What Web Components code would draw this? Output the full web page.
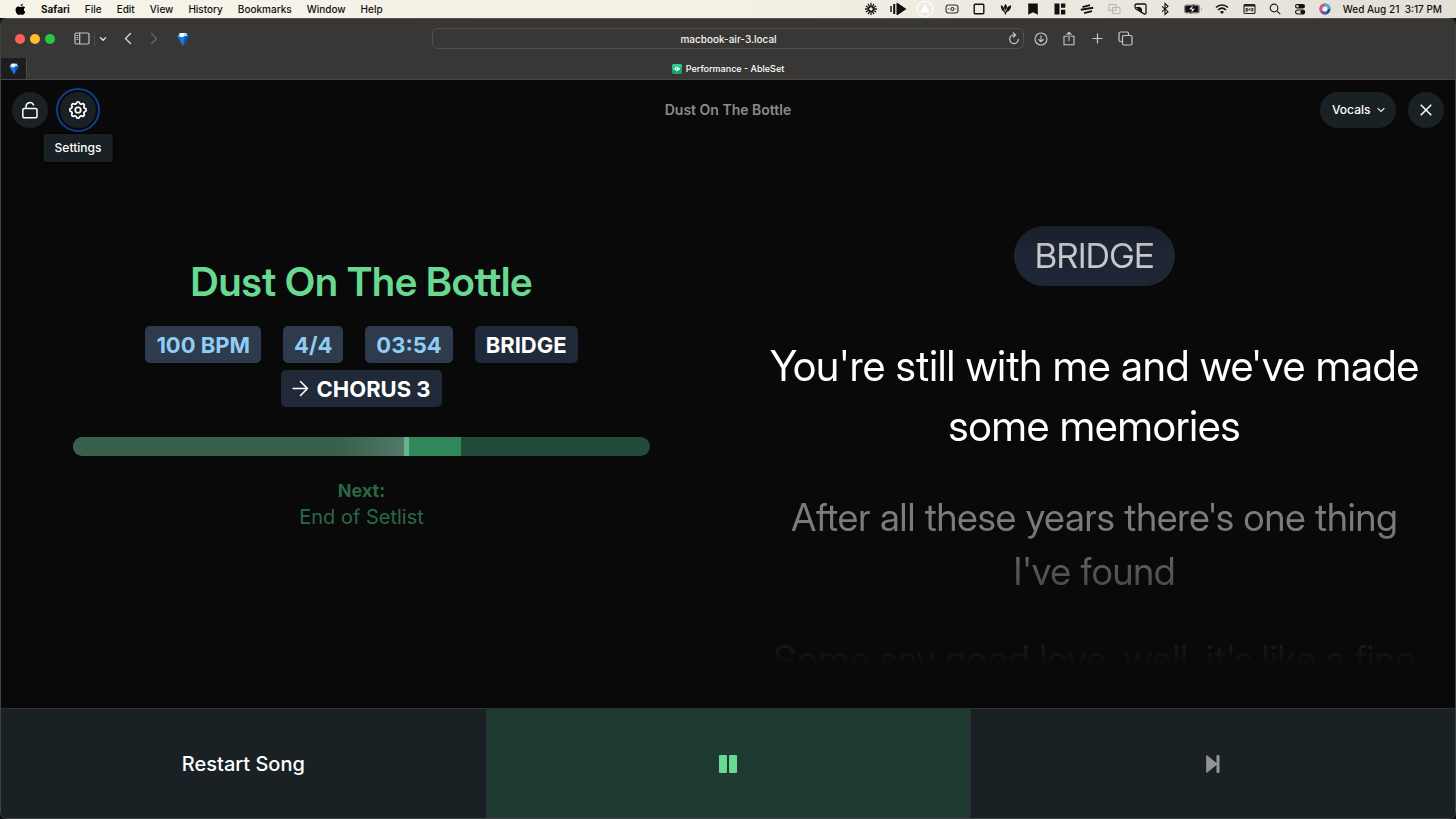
<!DOCTYPE html>
<html lang="en">
<head>
<meta charset="utf-8">
<title>Performance - AbleSet</title>
<style>
  html, body { margin: 0; height: 100%; }
  body { background: #101214; font-family: Inter, "Liberation Sans", sans-serif; color: #fff; }
</style>
</head>
<body>
<desktop-screen></desktop-screen>
<script>
const ICONS = {
  apple: [12, 14, '<path fill="#000" d="M8.500.8c.1 1.300-1 2.600-2.300 2.600C6.100 2.200 7.300.900 8.500.800zM11.200 9.600c-.6 1.700-1.700 3.400-2.900 3.400-.9 0-1.100-.5-2.200-.5s-1.400.5-2.200.5C2.300 13 .6 10 .6 7.500c0-2.400 1.400-3.800 3-3.800 1 0 1.700.6 2.500.6.8 0 1.500-.6 2.700-.6.9 0 1.700.5 2.300 1.200-2 1.200-1.700 3.900.1 4.700z"/>'],
  burst: [14, 14, '<g stroke="#111" stroke-width="1.300" stroke-linecap="round"><path d="M9.500 7H12.500M9.170 8.250L11.760 9.750M8.250 9.170L9.750 11.760M7 9.500V12.500M5.750 9.170L4.250 11.760M4.830 8.250L2.240 9.750M4.500 7H1.500M4.830 5.750L2.240 4.250M5.750 4.830L4.250 2.240M7 4.500V1.500M8.250 4.830L9.750 2.240M9.170 5.750L11.760 4.250"/></g><circle cx="7" cy="7" r="2.300" fill="none" stroke="#111" stroke-width="1"/>'],
  barsplay: [17, 14, '<path fill="#111" d="M.3 4h1.400v6H.3zM3.200 2h2v10h-2zM6.500 1H8v12H6.500zM8 1.200l8.500 5.800L8 12.800z"/>'],
  tricircle: [18, 18, '<circle cx="9" cy="9" r="7.700" fill="#eceae1" stroke="#fff" stroke-width="1.200"/><path d="M9 4.500l4.300 7.700H4.700z" fill="#fff" stroke="#fff"/>'],
  camera: [14, 12, '<g fill="none" stroke="#333" stroke-width="1.100"><rect x="1" y="2" width="12" height="8" rx="2.500"/><circle cx="7.400" cy="6" r="1.500"/><path d="M2.800 6h1.400M10.500 6h.8"/></g>'],
  square: [12, 12, '<rect x="1.200" y="1.200" width="9.600" height="9.600" rx="1" fill="none" stroke="#111" stroke-width="1.400"/>'],
  tulip: [12, 12, '<path fill="#111" d="M.8 2.300c2 .6 3.100 1.900 3.500 3.700C3.800 4 4.200 2.300 5.500 1 7 2.300 7.300 4 6.700 6 7.300 4 8.800 2.700 11.200 2.300 11.200 5.500 9.700 8 6.700 9l-1 2.500h-.9L4.500 9C1.800 8 .8 5.300.8 2.300z"/><path stroke="#eeebe2" stroke-width=".7" fill="none" d="M4.400 5.500l.8 3M6.700 5.500l-1.100 3"/>'],
  bookmark: [12, 12, '<path fill="#111" d="M1.200.5h9.600v11.200L6 9.200l-4.800 2.500z"/>'],
  layout: [12, 12, '<path fill="#111" d="M.5.5H5.500v11H.5zM7 .5h4.300v4.300H7zM7 6.800h4.300v4.700H7z"/>'],
  slashes: [14, 12, '<path stroke="#111" stroke-width="1.900" d="M2.500 4.200l7.500-2M.8 6.800l12.400-2M4 10.200l8-2" fill="none"/>'],
  overlap: [13, 12, '<g fill="none" stroke="#bdb9b1" stroke-width="1.100"><rect x="1" y="1.500" width="7" height="6"/><rect x="4.500" y="4.500" width="7.500" height="6"/></g>'],
  corner: [13, 12, '<path fill="none" stroke="#111" stroke-width="1.300" d="M3 1h7.500Q12 1 12 2.500v7.200q0 1.500-1.500 1.300L2 6Q1 5.300 1 3.500V2.500Q1 1 3 1z"/><path fill="#111" d="M1.500 4l4.500 0 2 2v4z"/>'],
  bluetooth: [10, 14, '<path fill="none" stroke="#111" stroke-width="1.100" d="M2 4.300l6 5.400L5 12.500v-11l3 2.800-6 5.400"/>'],
  battery: [20, 12, '<rect x="1" y="1.500" width="16" height="9" rx="2.500" fill="#8e8b85"/><rect x="2.300" y="2.700" width="13" height="6.600" rx="1.300" fill="#111"/><path fill="#8e8b85" d="M18 4.500c1 .3 1 2.700 0 3z"/><path fill="#fff" stroke="#111" stroke-width=".6" d="M10.500 1.500L5.800 6.700h3l-1 4L12.300 5.500h-3z"/>'],
  wifi: [14, 12, '<g fill="none" stroke="#111" stroke-width="1.600"><path d="M1 4.500c3.500-3.300 8.500-3.300 12 0M3 7c2.400-2.200 5.600-2.200 8 0"/></g><path fill="#111" d="M4.900 8.800c1.300-1.100 2.900-1.100 4.200 0L7 11z"/>'],
  window: [13, 12, '<rect x="1" y="1.500" width="11" height="9" rx="1" fill="none" stroke="#222" stroke-width="1.100"/><path fill="#222" d="M1 1.500h11v2H1z"/><path fill="#444" d="M2.600 5h2.200v3.800H2.600zM5.500 5.500h2v2h-2zM8.300 5h2v3.500h-2z"/>'],
  search: [12, 12, '<g fill="none" stroke="#222" stroke-width="1.200"><circle cx="5" cy="5" r="3.800"/><path d="M7.800 7.800L11.200 11.200"/></g>'],
  control: [12, 12, '<rect x="1" y="1" width="10" height="4.400" rx="2.200" fill="#111"/><circle cx="3.500" cy="3.200" r="1.200" fill="#e6e2d9"/><rect x="1.600" y="7" width="9" height="4" rx="2" fill="none" stroke="#111" stroke-width="1.100"/><circle cx="8.300" cy="9" r="2" fill="#111"/>'],
  siri: [12, 12, '<circle cx="6" cy="6" r="5.500" fill="#274a8f"/><path d="M6 .5A5.500 5.500 0 0 0 2 9.800L6 6z" fill="#d9528f"/><path d="M6 .5a5.500 5.500 0 0 1 5.500 5.500L6 6z" fill="#46b7c4"/><path d="M2 9.800a5.500 5.500 0 0 0 6 1.300L6 6z" fill="#6a4bb5"/><circle cx="6" cy="6" r="2.600" fill="#e8f4f8"/>'],
  sidebar: [16, 13, '<g fill="none" stroke="#c9c8c6" stroke-width="1.200"><rect x="1" y="1" width="14" height="11" rx="1.500"/><path d="M5.700 1v11"/></g><path stroke="#c9c8c6" d="M2.500 3.500h1.800M2.500 5.500h1.800M2.500 7.500h1.800"/>'],
  minichev: [8, 6, '<path fill="none" stroke="#e4e3e1" stroke-width="1.400" stroke-linecap="round" d="M1.500 1.800L4 4.200l2.500-2.400"/>'],
  back: [8, 13, '<path fill="none" stroke="#d6d5d3" stroke-width="1.400" stroke-linecap="round" d="M6.500 1.500l-5 5 5 5"/>'],
  forward: [8, 13, '<path fill="none" stroke="#686765" stroke-width="1.300" stroke-linecap="round" d="M1.500 1.500l5 5-5 5"/>'],
  gem: [12, 14, '<path fill="#1a78dd" d="M2.600 1h6.800L11.700 4.300 6.300 13.500h-.6L.3 4.300z"/><path fill="#9ee0ff" d="M2.600 1h6.800l1 3.300H1.300z"/><path fill="#fff" d="M3.500 1h4L6.500 5H3z"/><path fill="#0a4fb5" d="M8 4.300h3.700L6.300 13.500z"/>'],
  reload: [12, 13, '<path fill="none" stroke="#d0cfcd" stroke-width="1.200" stroke-linecap="round" d="M10.300 7.300A4.300 4.300 0 1 1 6 3h1M5.300 1l2.200 2-2 2.200"/>'],
  download: [14, 14, '<g fill="none" stroke="#c9c8c6" stroke-width="1.100" stroke-linecap="round"><circle cx="7" cy="7" r="6"/><path d="M7 3.900v5.600M4.700 7.500L7 9.800l2.300-2.300"/></g>'],
  share: [12, 15, '<g fill="none" stroke="#c9c8c6" stroke-width="1.100" stroke-linecap="round"><path d="M4 5.300H1v8.500h10V5.300H8M6 9.500V1.200M3.800 3.300L6 1.200l2.200 2.100"/></g>'],
  plus: [11, 11, '<path stroke="#c9c8c6" stroke-width="1.200" d="M5.500.5v10M.5 5.500h10"/>'],
  tabs: [15, 15, '<g fill="none" stroke="#c9c8c6" stroke-width="1.200"><rect x="4.500" y="4.500" width="9.500" height="9.500" rx="1.500"/><path d="M4.500 10.500h-2a1.500 1.500 0 0 1-1.500-1.500V2.500A1.500 1.500 0 0 1 2.500 1H9a1.500 1.500 0 0 1 1.500 1.500v2"/></g>'],
  ableset: [10, 10, '<rect width="10" height="10" rx="2" fill="#14a86c"/><rect width="10" height="4" rx="2" fill="#2ccf9a"/><path fill="#fff" d="M1.500 4.300h1v1.400h-1zM3 3.400h1v3.200H3zM4.500 2.500L8.500 5l-4 2.500z"/>'],
  unlock: [20, 20, '<g fill="none" stroke="#fff" stroke-width="1.500" stroke-linecap="round" stroke-linejoin="round"><rect x="2.800" y="8.500" width="14.200" height="9.300" rx="1.500"/><path d="M6 8.300V6.500a4 4 0 0 1 7.600-1.600"/></g>'],
  gear: [24, 24, '<g fill="none" stroke="#fff" stroke-width="1.900" stroke-linejoin="round"><circle cx="12" cy="12" r="3"/><path d="M10.325 4.317c.426-1.756 2.924-1.756 3.350 0a1.724 1.724 0 0 0 2.573 1.066c1.543-.94 3.310.826 2.370 2.370a1.724 1.724 0 0 0 1.065 2.572c1.756.426 1.756 2.924 0 3.350a1.724 1.724 0 0 0-1.066 2.573c.94 1.543-.826 3.310-2.370 2.370a1.724 1.724 0 0 0-2.572 1.065c-.426 1.756-2.924 1.756-3.350 0a1.724 1.724 0 0 0-2.573-1.066c-1.543.94-3.310-.826-2.370-2.370a1.724 1.724 0 0 0-1.065-2.572c-1.756-.426-1.756-2.924 0-3.350a1.724 1.724 0 0 0 1.066-2.573c-.94-1.543.826-3.310 2.370-2.370 1 .608 2.296.07 2.572-1.065z"/></g>'],
  chevron: [8, 6, '<path fill="none" stroke="#dfe3e4" stroke-width="1.200" stroke-linecap="round" d="M1 1.500l3 3 3-3"/>'],
  close: [12, 12, '<path stroke="#fff" stroke-width="1.600" stroke-linecap="round" d="M1.200 1.200l9.600 9.600M10.800 1.200l-9.600 9.600"/>'],
  arrow: [17, 17, '<path fill="none" stroke="#fff" stroke-width="1.600" stroke-linecap="round" stroke-linejoin="round" d="M1.200 8.500h14.300M8.500 1.500l7 7-7 7"/>'],
  pause: [18, 18, '<rect x="0" y="0" width="8" height="18" rx="1" fill="#68d991"/><rect x="10" y="0" width="8" height="18" rx="1" fill="#68d991"/>'],
  next: [14, 18, '<path fill="#929597" d="M1 .3L10.500 8V1q0-1 1-1h1q1 0 1 1v16q0 1-1 1h-1q-1 0-1-1v-7L1 17.700q-.8.300-.8-.7V1q0-1 .8-.7z"/>']
};

function define(name, template) {
  customElements.define(name, class extends HTMLElement {
    constructor() {
      super();
      this.attachShadow({ mode: 'open' }).innerHTML = template;
    }
  });
}

customElements.define('ui-icon', class extends HTMLElement {
  constructor() { super(); this.attachShadow({ mode: 'open' }); }
  connectedCallback() {
    const [w, h, body] = ICONS[this.getAttribute('name')];
    const width = Number(this.getAttribute('size')) || w;
    this.shadowRoot.innerHTML = `<style>:host{display:inline-flex;flex:none;align-items:center;justify-content:center}svg{display:block}</style>
      <svg width="${width}" height="${width * h / w}" viewBox="0 0 ${w} ${h}" aria-hidden="true">${body}</svg>`;
  }
});

define('mac-menubar', `<style>
  :host { display: flex; align-items: center; justify-content: space-between; height: 18px; padding: 0 14px 0 15px;
    background: linear-gradient(90deg, #f6f3e9, #f3f0e6 50%, #e3dfd6); color: #111; font-size: 10px; line-height: 18px; white-space: nowrap; }
  nav, .status { display: flex; align-items: center; }
  nav { gap: 15px; }
  a { color: inherit; text-decoration: none; font-weight: 500; }
  .app { font-weight: 700; }
  nav ui-icon { width: 11px; }
  .status ui-icon { width: 27px; }
  .status .tight { width: 25px; }
  .status .wide { width: 31px; }
  time { margin-left: 5px; font-weight: 500; }
</style>
<nav><ui-icon name="apple" size="11"></ui-icon><a class="app" href="#">Safari</a><a href="#">File</a><a href="#">Edit</a><a href="#">View</a><a href="#">History</a><a href="#">Bookmarks</a><a href="#">Window</a><a href="#">Help</a></nav>
<div class="status">${['burst','barsplay','tricircle','camera','square','tulip','bookmark','layout','slashes','overlap'].map(n => `<ui-icon name="${n}"></ui-icon>`).join('')}<ui-icon class="tight" name="corner"></ui-icon><ui-icon class="tight" name="bluetooth"></ui-icon><ui-icon class="wide" name="battery"></ui-icon>${['wifi','window'].map(n => `<ui-icon name="${n}"></ui-icon>`).join('')}${['search','control','siri'].map(n => `<ui-icon class="tight" name="${n}"></ui-icon>`).join('')}<time datetime="2024-08-21T15:17">Wed Aug 21&nbsp; 3:17 PM</time></div>`);

define('browser-chrome', `<style>
  :host { display: block; background: #393735; border-bottom: 1px solid #484645; }
  .bar { display: grid; grid-template-columns: minmax(0, 1fr) minmax(0, 592px) minmax(0, 1fr); align-items: center; height: 39px; }
  .left, .right { display: flex; align-items: center; }
  .left { padding-left: 14px; }
  .lights { display: flex; gap: 5px; margin-right: 19px; }
  i { width: 10px; height: 10px; border-radius: 50%; background: #ff5f57; }
  i:nth-child(2) { background: #febc2e; }
  i:nth-child(3) { background: #28c840; }
  button { display: flex; align-items: center; justify-content: center; padding: 0; border: 0; background: none; width: 28px; height: 24px; }
  .side { width: 16px; margin-right: 4px; }
  .drop { width: 17px; border-left: 1px solid #4b4947; height: 14px; }
  .nav { width: 26px; }
  .back { margin-left: 4px; }
  .gem { width: 32px; }
  .right { padding-left: 3px; }
  .url { display: flex; align-items: center; height: 21px; box-sizing: border-box; border: 1px solid #51504e; border-radius: 6px; padding-right: 3px; }
  .url input { flex: 1; min-width: 0; padding: 0 0 0 16px; border: 0; background: none; color: #f3f3f2; font: 500 10px/18px Inter, sans-serif; text-align: center; outline: 0; }
  .url button { width: 12px; height: 18px; }
  .tabs { display: grid; grid-template-columns: 26px 1fr 26px; height: 21px; }
  .pin { display: flex; align-items: center; justify-content: center; background: #1e1c1e; border-right: 1px solid #4a4846; box-sizing: border-box; }
  .tab { display: flex; align-items: center; justify-content: center; gap: 4px; color: #fff; font-size: 9px; font-weight: 500; text-decoration: none; }
</style>
<div class="bar">
  <div class="left"><div class="lights"><i></i><i></i><i></i></div>
    <button class="side" aria-label="Show sidebar"><ui-icon name="sidebar"></ui-icon></button>
    <button class="drop" aria-label="Tab groups"><ui-icon name="minichev"></ui-icon></button>
    <button class="nav back" aria-label="Back"><ui-icon name="back"></ui-icon></button>
    <button class="nav" aria-label="Forward"><ui-icon name="forward"></ui-icon></button>
    <button class="gem" aria-label="Extension"><ui-icon name="gem"></ui-icon></button></div>
  <div class="url"><input type="text" aria-label="Address" value="macbook-air-3.local"><button aria-label="Reload"><ui-icon name="reload"></ui-icon></button></div>
  <div class="right"><button aria-label="Downloads"><ui-icon name="download"></ui-icon></button><button aria-label="Share"><ui-icon name="share"></ui-icon></button><button aria-label="New tab"><ui-icon name="plus"></ui-icon></button><button aria-label="Tab overview"><ui-icon name="tabs"></ui-icon></button></div>
</div>
<div class="tabs"><a class="pin" href="#" aria-label="Pinned tab"><ui-icon name="gem" size="10"></ui-icon></a><a class="tab" href="#"><ui-icon name="ableset"></ui-icon>Performance - AbleSet</a></div>`);

define('round-button', `<style>
  :host { display: block; position: relative; }
  button { display: flex; align-items: center; justify-content: center; width: 36px; height: 36px; padding: 0; border: 0; border-radius: 50%; background: #1a2124; }
  :host([focused]) button { outline: 2px solid #0d3f94; outline-offset: 2px; }
  ::slotted([slot=tip]) { position: absolute; z-index: 2; top: 42px; left: 50%; transform: translateX(-50%); padding: 0 11px; border-radius: 3px; background: #1a2124; font-size: 12px; font-weight: 500; line-height: 28px; box-shadow: 0 1px 4px #000; }
</style><button><slot></slot></button><slot name="tip"></slot>`);

define('app-header', `<style>
  :host { display: grid; grid-template-columns: 1fr auto 1fr; align-items: center; height: 60px; padding: 0 11px; }
  .group { display: flex; gap: 12px; align-items: center; }
  .end { justify-content: flex-end; }
  h1 { margin: 0; font-size: 14px; line-height: 20px; font-weight: 600; color: #8b8b8d; }
  .select { position: relative; display: flex; align-items: center; }
  select { appearance: none; width: 76px; height: 36px; padding: 0 12px; border: 0; border-radius: 18px; background: #1a2124; color: #fff; font: 500 12px/20px Inter, sans-serif; }
  .select ui-icon { position: absolute; right: 11px; pointer-events: none; }
</style>
<div class="group"><round-button><ui-icon name="unlock"></ui-icon></round-button>
<round-button focused><ui-icon name="gear" size="22"></ui-icon><span slot="tip" role="tooltip">Settings</span></round-button></div>
<h1>Dust On The Bottle</h1>
<div class="group end"><div class="select"><select aria-label="Lyrics track"><option>Vocals</option></select><ui-icon name="chevron"></ui-icon></div>
<round-button><ui-icon name="close"></ui-icon></round-button></div>`);

define('info-badge', `<style>
  :host { display: inline-flex; align-items: center; gap: 7px; height: 37px; padding: 0 11px; border-radius: 5px; background: #2e3b4d; color: #90cdf4; font-size: 22px; font-weight: 700; white-space: nowrap; }
  :host([section]) { background: #1f2937; color: #fff; }
</style><slot></slot>`);

define('song-progress', `<style>
  :host { display: flex; height: 19px; border-radius: 10px; overflow: hidden; background: #224b3a; }
  .played { flex: 332; background: linear-gradient(90deg, #38604c 80%, #527867); }
  .head { flex: 5; background: #62b68a; }
  .section { flex: 52; background: #30875a; }
  .rest { flex: 189; }
</style><div class="played"></div><div class="head"></div><div class="section"></div><div class="rest"></div>`);

define('song-panel', `<style>
  :host { display: flex; flex-direction: column; justify-content: center; padding: 0 10% 66px; text-align: center; }
  h2 { margin: 0; color: #68d991; font-family: "Inter Display", Inter, sans-serif; font-variation-settings: "opsz" 32; font-size: 40px; line-height: 60px; font-weight: 600; }
  .badges { display: flex; flex-wrap: wrap; justify-content: center; gap: 7px 22px; margin: 14px 0 30px; }
  p { margin: 0; color: #296846; font-size: 20px; line-height: 26px; }
  .next { margin-top: 22px; font-size: 18px; font-weight: 700; }
</style>
<h2>Dust On The Bottle</h2>
<div class="badges"><info-badge>100 BPM</info-badge><info-badge>4/4</info-badge><info-badge>03:54</info-badge><info-badge section>BRIDGE</info-badge><info-badge section><ui-icon name="arrow"></ui-icon>CHORUS 3</info-badge></div>
<song-progress role="progressbar" aria-label="Song position" aria-valuenow="57"></song-progress>
<p class="next">Next:</p><p>End of Setlist</p>`);

define('lyrics-panel', `<style>
  :host { --fade: linear-gradient(transparent, #000 110px, #000 calc(100% - 182px), transparent calc(100% - 42px));
    display: flex; flex-direction: column; align-items: center; min-height: 0; padding-top: 86px; box-sizing: border-box; text-align: center; white-space: nowrap;
    font-family: "Inter Display", Inter, sans-serif; font-variation-settings: "opsz" 32;
    -webkit-mask-image: var(--fade); mask-image: var(--fade); }
  p { flex: none; margin: 0; color: #7b7b7b; font-size: 38px; line-height: 54px; }
  p + p { margin-top: 34px; }
  .section { padding: 0 21px; border-radius: 30px; background: #1e2635; color: #c9c9cb; font-size: 34px; line-height: 60px; }
  p.now { margin-top: 50px; color: #fff; font-size: 42px; line-height: 60px; }
</style>
<p class="section">BRIDGE</p>
<p class="now">You're still with me and we've made<br>some memories</p>
<p>After all these years there's one thing<br>I've found</p>
<p>Some say good love, well, it's like a fine</p>`);

define('transport-bar', `<style>
  :host { display: grid; grid-template-columns: repeat(3, 1fr); height: 109px; border-top: 1px solid #2a3336; }
  button { display: flex; align-items: center; justify-content: center; padding: 0; border: 0; background: #1a2124; color: #fff; font: 500 20px/28px Inter, sans-serif; }
  .play { background: #1f3a30; }
  .play + button { border-left: 1px solid #273135; }
</style>
<button>Restart Song</button><button class="play" aria-label="Pause"><ui-icon name="pause"></ui-icon></button><button aria-label="Next song"><ui-icon name="next"></ui-icon></button>`);

define('desktop-screen', `<style>
  :host { display: flex; flex-direction: column; height: 100vh; min-height: 680px; }
  .window { flex: 1; min-height: 0; display: flex; flex-direction: column; overflow: hidden; border: 1px solid #3d4446; border-top-color: #555453; border-radius: 7px; background: #090909; }
  main { flex: 1; min-height: 0; display: grid; grid-template-columns: minmax(0, 1fr) minmax(0, 1fr); grid-template-rows: minmax(0, 1fr); gap: 12px; }
</style>
<mac-menubar></mac-menubar>
<div class="window"><browser-chrome></browser-chrome><app-header></app-header>
<main><song-panel></song-panel><lyrics-panel></lyrics-panel></main>
<transport-bar></transport-bar></div>`);
</script>
</body>
</html>
